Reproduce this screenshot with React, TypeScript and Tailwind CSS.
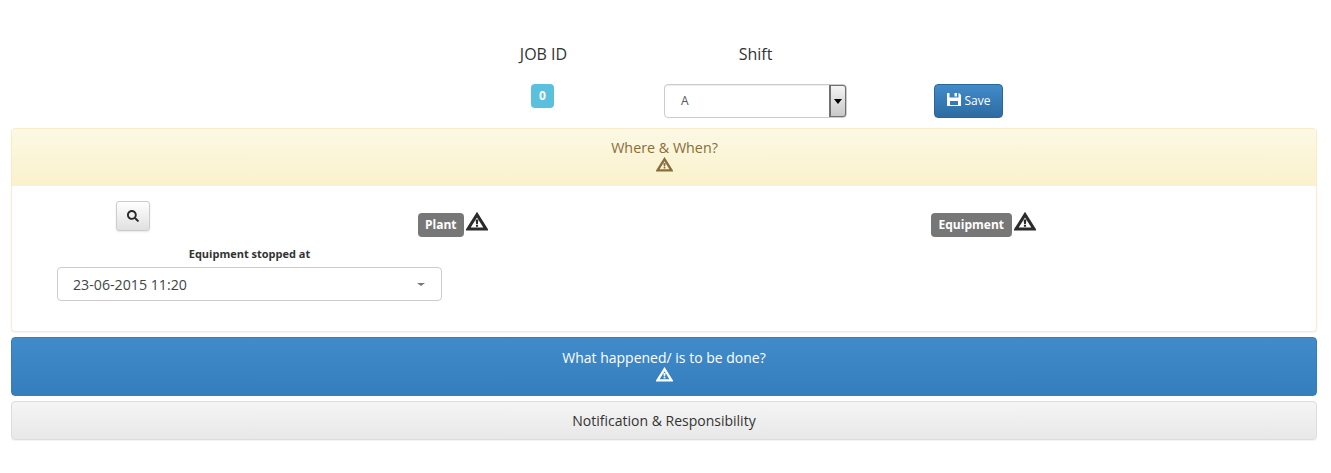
import { FaSearch } from "react-icons/fa";

function WarnIcon({ className }: { className: string }) {
  return (
    <svg viewBox="0 0 22 19" className={className} fill="none">
      <path d="M11 2.6 L20 17 H2 Z" stroke="currentColor" strokeWidth="3" strokeLinejoin="miter" />
      <path d="M9.6 7.4h2.8l-.5 4.6h-1.8z M9.9 12.8h2.2v2h-2.2z" fill="currentColor" />
    </svg>
  );
}

function FloppyIcon() {
  return (
    <svg viewBox="0 0 14 13" className="mb-[4px] h-[13px] w-[14px]" fill="currentColor">
      <path d="M0 0h2.5v4.5h9V0h.5l2 2v11H0z M3 8v4h8V8z" />
      <path d="M7.5 0h2.5v3.5H7.5z" />
    </svg>
  );
}

function Label({ text, pad }: { text: string; pad: string }) {
  return (
    <div className="flex items-start">
      <span className={`${pad} mt-[1px] flex h-6 items-center rounded-[4px] bg-[#777777] text-[12px] font-bold text-white`}>
        {text}
      </span>
      <WarnIcon className="ml-[2px] h-[19px] w-[22px] text-[#2b2b2b]" />
    </div>
  );
}

export default function App() {
  return (
    <div className="h-[473px] bg-white pl-[11px] pr-[14px] pt-[45px] font-['Open_Sans','Noto_Sans',sans-serif] text-[#333333]">
      {/* job header */}
      <div className="flex h-[83px]">
        <div className="ml-[497px] flex w-[70px] flex-col items-center">
          <div className="text-[16px] leading-[19px] ml-[1px]">JOB ID</div>
          <span className="ml-[-1px] mt-5 flex h-6 w-[23px] items-center justify-center rounded-[4px] bg-[#5bc0de] text-[12px] font-bold text-white">
            0
          </span>
        </div>
        <div className="ml-[86px] flex w-[183px] flex-col items-center">
          <div className="text-[16px] leading-[19px]">Shift</div>
          <div className="mt-5 flex h-[34px] w-full items-stretch rounded-[4px] border border-[#cccccc] bg-white shadow-[inset_0_1px_1px_rgba(0,0,0,0.075)]">
            <span className="flex-1 pl-4 text-[12px] leading-[32px] text-[#555555]">A</span>
            <span className="flex w-[17px] items-center justify-center rounded-r-[3px] border border-l-2 border-[#707070] bg-gradient-to-b from-[#f4f4f4] to-[#c8c8c8]">
              <span className="h-0 w-0 border-x-[4px] border-t-[5px] border-x-transparent border-t-black" />
            </span>
          </div>
        </div>
        <button className="ml-[87px] mt-[39px] flex h-[34px] w-[69px] items-center justify-center gap-1 rounded-[4px] border border-[#2b669a] bg-gradient-to-b from-[#428bca] to-[#2d6ca2] text-[12px] text-white">
          <FloppyIcon />
          Save
        </button>
      </div>

      {/* where and when */}
      <div className="h-[204px] rounded-[4px] border border-[#faebcc] bg-white shadow-[0_1px_1px_rgba(0,0,0,0.05)]">
        <div className="flex h-[57px] flex-col items-center rounded-t-[3px] bg-gradient-to-b from-[#fcf8e3] to-[#faf2cc] pt-[10px] text-[#8a6d3b]">
          <div className="ml-[1px] text-[14.3px] leading-[18px]">Where &amp; When?</div>
          <WarnIcon className="ml-[1px] h-[15px] w-[17px]" />
        </div>
        <div className="flex">
          <div className="ml-[45px] mt-[15px] flex w-[385px] flex-col items-center">
            <button className="ml-[59px] flex h-[30px] w-[34px] items-center justify-center self-start rounded-[3px] border border-[#cccccc] bg-gradient-to-b from-white to-[#e0e0e0] text-[#2b2b2b] shadow-[0_1px_2px_rgba(0,0,0,0.1)]">
              <FaSearch className="h-[12px] w-[12px]" />
            </button>
            <div className="mt-[14px] text-[11px] font-bold leading-[18px]">Equipment stopped at</div>
            <div className="mt-[4px] flex h-[34px] w-full items-center rounded-[4px] border border-[#cccccc] pl-[15px] pr-[16px] pt-[1px] text-[14.2px] text-[#444444]">
              <span className="flex-1">23-06-2015 11:20</span>
              <span className="h-0 w-0 border-x-[4px] border-t-[3px] border-x-transparent border-t-[#777777]" />
            </div>
          </div>
          <div className="ml-[-24px] mt-[26px]">
            <Label text="Plant" pad="px-[7px]" />
          </div>
          <div className="ml-[443px] mt-[26px]">
            <Label text="Equipment" pad="px-2" />
          </div>
        </div>
      </div>

      {/* what happened */}
      <div className="mt-[5px] flex h-[59px] flex-col items-center rounded-[4px] border border-[#357ebd] bg-gradient-to-b from-[#428bca] to-[#357ebd] pt-[11px] text-white">
        <div className="text-[14px] leading-[18px]">What happened/ is to be done?</div>
        <WarnIcon className="ml-[1px] h-[15px] w-[17px]" />
      </div>

      {/* notification */}
      <div className="mt-[5px] flex h-[39px] items-center justify-center rounded-[4px] border border-[#dddddd] bg-gradient-to-b from-[#f5f5f5] to-[#e8e8e8] text-[14px] shadow-[0_1px_1px_rgba(0,0,0,0.05)]">
        Notification &amp; Responsibility
      </div>
    </div>
  );
}
